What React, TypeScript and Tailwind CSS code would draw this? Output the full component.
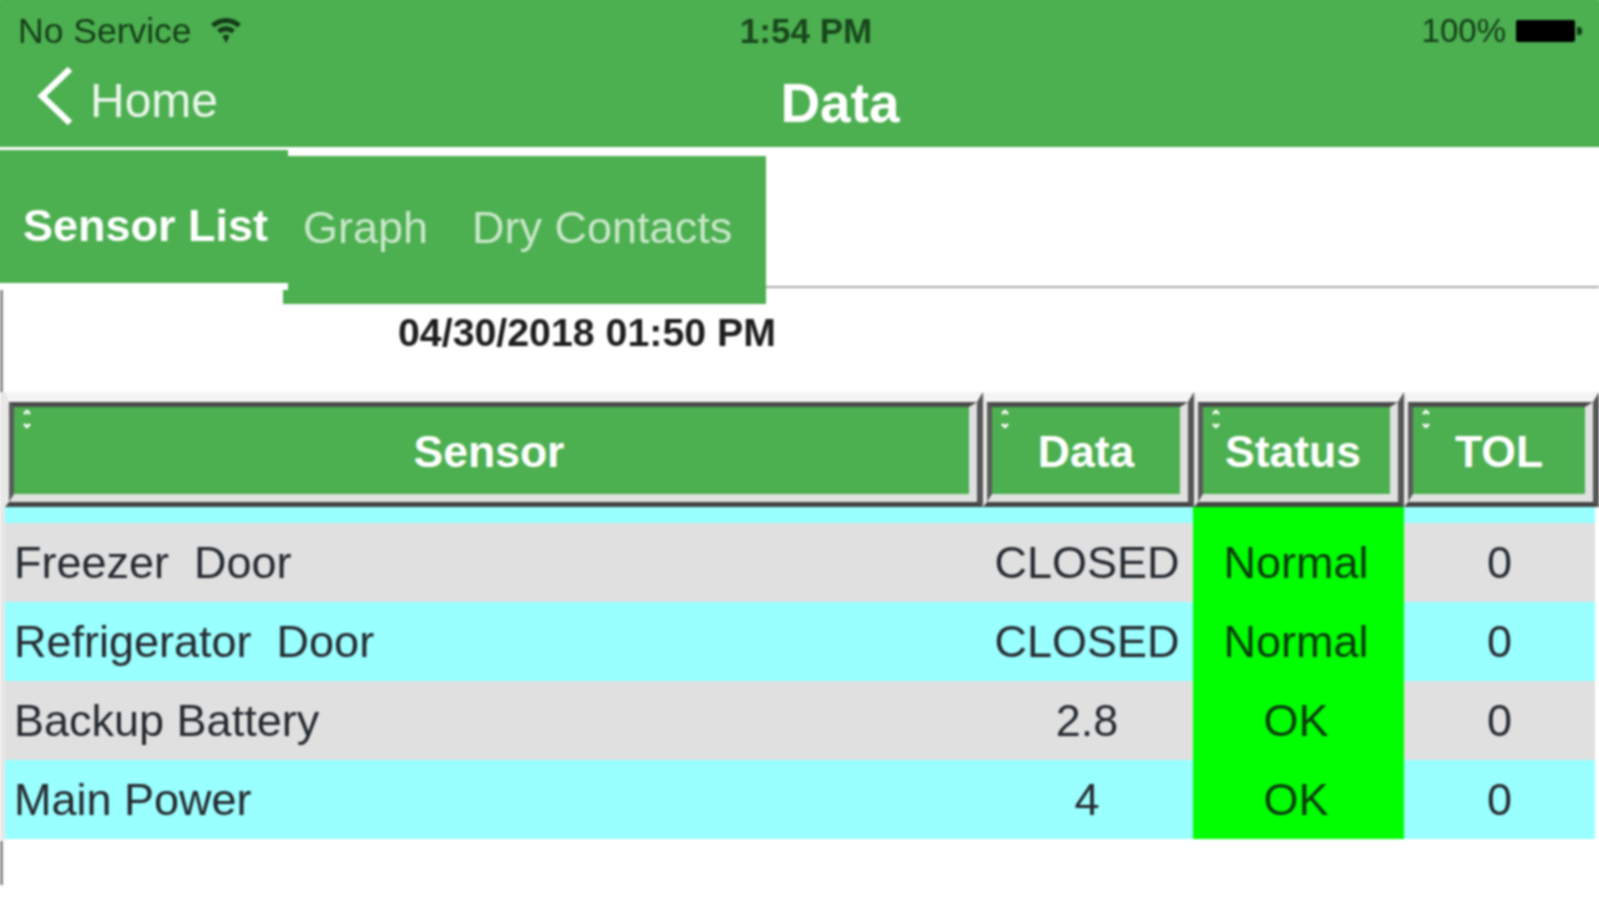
import React from 'react';

const rows = [
  { sensor: 'Freezer\u00a0\u00a0Door', data: 'CLOSED', status: 'Normal', tol: '0', bg: 'bg-[#e0e0e0]' },
  { sensor: 'Refrigerator\u00a0\u00a0Door', data: 'CLOSED', status: 'Normal', tol: '0', bg: 'bg-[#99ffff]' },
  { sensor: 'Backup Battery', data: '2.8', status: 'OK', tol: '0', bg: 'bg-[#e0e0e0]' },
  { sensor: 'Main Power', data: '4', status: 'OK', tol: '0', bg: 'bg-[#99ffff]' },
];

function SortArrows() {
  return (
    <svg className="absolute left-[7px] top-[2px]" width="12" height="20" viewBox="0 0 12 20" fill="none" stroke="#ffffff" strokeWidth="2.5">
      <path d="M3 5 L6 2 L9 5" />
      <path d="M3 15 L6 18 L9 15" />
    </svg>
  );
}

function HeaderCell({ label, width, textClass }: { label: string; width: string; textClass?: string }) {
  return (
    <div className={`${width} h-[115px] shrink-0 border-t-[10px] border-l-[4px] border-r-[6px] border-b-[5px] border-t-[#f4f4f4] border-l-[#e8e8e8] border-r-[#555555] border-b-[#444444]`}>
      <div className="h-full border-t-[5px] border-l-[5px] border-r-[8px] border-b-[8px] border-t-[#4a4a4a] border-l-[#5a5a5a] border-r-[#e0e0e0] border-b-[#dfe3df] bg-[#4caf50] relative flex items-center justify-center">
        <SortArrows />
        <span className={`text-[44.5px] font-bold text-white pt-[3px] ${textClass ?? ''}`}>{label}</span>
      </div>
    </div>
  );
}

export default function App() {
  return (
    <div className="w-[1599px] h-[900px] bg-white overflow-hidden">
      <div className="w-[1599px] h-[900px] blur-[1px] font-['Liberation_Sans',Arial,sans-serif]">
        {/* Status bar and nav */}
        <header className="h-[147px] bg-[#4caf50] flex flex-col shadow-[0_-4px_0_0_#4caf50,-4px_0_0_0_#4caf50,4px_0_0_0_#4caf50]">
          <div className="h-[62px] pl-[18px] pr-[17px] flex items-center justify-between text-[#143c17]">
            <div className="flex items-center gap-[18px] w-[506px] pt-[1px]">
              <span className="text-[35.5px]">No Service</span>
              <svg width="32" height="28" viewBox="0 0 32 28" fill="#143c17" className="mb-[4px]">
                <path d="M1 8 C9 0 23 0 31 8 L27.5 11.5 C21 5.5 11 5.5 4.5 11.5 Z" />
                <path d="M7 14 C12 9 20 9 25 14 L21.5 17.5 C18 14.5 14 14.5 10.5 17.5 Z" />
                <path d="M12.5 20 C15 18 17 18 19.5 20 L16 27 Z" />
              </svg>
            </div>
            <span className="text-[35px] font-bold opacity-90">1:54 PM</span>
            <div className="flex items-center justify-end gap-[10px] w-[494px]">
              <span className="text-[33px]">100%</span>
              <div className="flex items-center">
                <div className="w-[59px] h-[22px] bg-black rounded-[2px]" />
                <div className="w-[5px] h-[8px] ml-[2px] bg-[#143c17] rounded-r-[3px]" />
              </div>
            </div>
          </div>
          <div className="flex-1 flex items-center relative">
            <svg width="38" height="60" viewBox="0 0 38 60" fill="none" stroke="#ffffff" strokeWidth="6.5" className="ml-[36px] mb-[18px]">
              <path d="M34 3 L6 30 L34 57" />
            </svg>
            <span className="text-[48px] text-[#eaf6eb] ml-[16px] mb-[8px]">Home</span>
            <span className="absolute left-0 right-0 pl-[81px] text-center text-[55px] font-bold text-white mb-[2px]">Data</span>
          </div>
        </header>

        {/* Tabs */}
        <div className="h-[157px] flex">
          <div className="w-[288px] shrink-0 flex flex-col relative z-10">
            <div className="mt-[3px] h-[133px] bg-[#4caf50] flex items-center pl-[23px] pt-[18px] text-[45px] font-bold text-white shadow-[-4px_0_0_0_#4caf50]">
              Sensor List
            </div>
            <div className="h-[7px] bg-white" />
            <div className="w-[3px] flex-1 bg-[#8a8a8a]" />
          </div>
          <div className="-ml-[5px] mt-[9px] w-[483px] h-[148px] bg-[#4caf50] flex text-[45px] text-[#c9e7ca] pl-[20px] gap-[44px] pt-[38px]">
            <span>Graph</span>
            <span>Dry Contacts</span>
          </div>
          <div className="flex-1 h-[141px] border-b-[2px] border-[#a8a8a8]" />
        </div>

        {/* Timestamp */}
        <div className="h-[88px] border-l-[3px] border-[#8a8a8a] pl-[395px] pt-[5px] text-[39.3px] font-bold leading-[46px] text-[#1e1e1e]">
          04/30/2018 01:50 PM
        </div>

        {/* Sensor table */}
        <div className="h-[448px] border-l-[5px] border-[#e8e8e8] w-[1599px] flex flex-col">
          <div className="flex">
            <HeaderCell label="Sensor" width="w-[978px]" textClass="pr-[5px]" />
            <HeaderCell label="Data" width="w-[211px]" />
            <HeaderCell label="Status" width="w-[210px]" textClass="pr-[7px]" />
            <HeaderCell label="TOL" width="w-[195px]" />
          </div>
          <div className="w-[1590px] flex">
            <div className="w-[1188px] h-[16px] bg-[#99ffff]" />
            <div className="w-[211px] h-[16px] bg-[#00ff00]" />
            <div className="w-[191px] h-[16px] bg-[#99ffff]" />
          </div>
          {rows.map((row) => (
            <div key={row.sensor} className={`w-[1590px] h-[79px] flex items-center text-[45px] text-[#252a30] ${row.bg}`}>
              <div className="w-[978px] pl-[9px] pt-[1px]">{row.sensor}</div>
              <div className="w-[210px] h-full flex items-center justify-center pr-[2px] pt-[1px]">{row.data}</div>
              <div className="w-[211px] h-full flex items-center justify-center bg-[#00ff00] text-[#0c3a10] pr-[5px] pt-[1px]">{row.status}</div>
              <div className="w-[191px] h-full flex items-center justify-center pt-[1px]">{row.tol}</div>
            </div>
          ))}
        </div>
        <div className="w-[3px] h-[44px] mt-[1px] bg-[#8a8a8a]" />
      </div>
    </div>
  );
}
